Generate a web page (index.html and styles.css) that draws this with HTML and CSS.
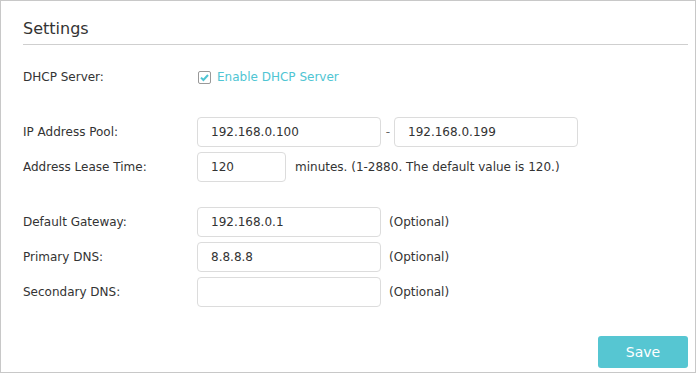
FILE: index.html
```html
<!DOCTYPE html>
<html lang="en">
<head>
    <meta charset="UTF-8">
    <title>DHCP Settings</title>
    <link rel="stylesheet" href="styles.css">
</head>
<body>
    <div class="panel">
        <h2 class="title">Settings</h2>

        <div class="row first">
            <label class="label">DHCP Server:</label>
            <span class="check">
                <svg width="13" height="13" viewBox="0 0 13 13">
                    <rect x="0.5" y="0.5" width="12" height="12" rx="1.5" fill="#fff" stroke="#999"/>
                    <path d="M3 6.6 L5.4 9 L10 4" fill="none" stroke="#4fc5d3" stroke-width="2"/>
                </svg>
                <span class="check-text">Enable DHCP Server</span>
            </span>
        </div>

        <div class="row group">
            <label class="label">IP Address Pool:</label>
            <input class="field" type="text" value="192.168.0.100">
            <span class="dash">-</span>
            <input class="field" type="text" value="192.168.0.199">
        </div>
        <div class="row">
            <label class="label">Address Lease Time:</label>
            <input class="field short" type="text" value="120">
            <span class="hint">minutes. (1-2880. The default value is 120.)</span>
        </div>

        <div class="row group">
            <label class="label">Default Gateway:</label>
            <input class="field" type="text" value="192.168.0.1">
            <span class="note">(Optional)</span>
        </div>
        <div class="row">
            <label class="label">Primary DNS:</label>
            <input class="field" type="text" value="8.8.8.8">
            <span class="note">(Optional)</span>
        </div>
        <div class="row">
            <label class="label">Secondary DNS:</label>
            <input class="field" type="text" value="">
            <span class="note">(Optional)</span>
        </div>

        <div class="actions">
            <button class="save">Save</button>
        </div>
    </div>
</body>
</html>
```

FILE: styles.css
```css
body {
    margin: 0;
    padding: 0;
    background: #fff;
    font-family: Tahoma, "DejaVu Sans", sans-serif;
    font-size: 12px;
    color: #333;
}
.panel {
    box-sizing: border-box;
    width: 696px;
    height: 373px;
    border: 1px solid #c8c8c8;
    padding: 17px 7px 0 22px;
}
.title {
    margin: 0;
    font-size: 16px;
    font-weight: normal;
    line-height: 22px;
    padding-bottom: 4px;
    border-bottom: 1px solid #cfcfcf;
}
.row {
    display: flex;
    align-items: center;
    height: 30px;
    margin-top: 5px;
}
.row.first {
    margin-top: 17px;
}
.row.group {
    margin-top: 25px;
}
.label {
    width: 174px;
    flex-shrink: 0;
}
.check {
    display: flex;
    align-items: center;
    padding-left: 1px;
}
.check svg {
    display: block;
}
.check-text {
    margin-left: 6px;
    color: #4fc5d3;
}
.field {
    box-sizing: border-box;
    width: 184px;
    height: 30px;
    border: 1px solid #dcdcdc;
    border-radius: 4px;
    padding: 0 0 0 13px;
    font-family: inherit;
    font-size: 12px;
    color: #333;
    outline: none;
}
.field.short {
    width: 89px;
}
.dash {
    width: 13px;
    padding-left: 1px;
    box-sizing: border-box;
    text-align: center;
    color: #666;
}
.hint {
    margin-left: 9px;
}
.note {
    margin-left: 8px;
}
.actions {
    display: flex;
    justify-content: flex-end;
    margin-top: 29px;
}
.save {
    width: 90px;
    height: 32px;
    border: none;
    border-radius: 3px;
    background: #56c6d2;
    color: #fff;
    font-family: inherit;
    font-size: 14px;
    cursor: pointer;
}
```
